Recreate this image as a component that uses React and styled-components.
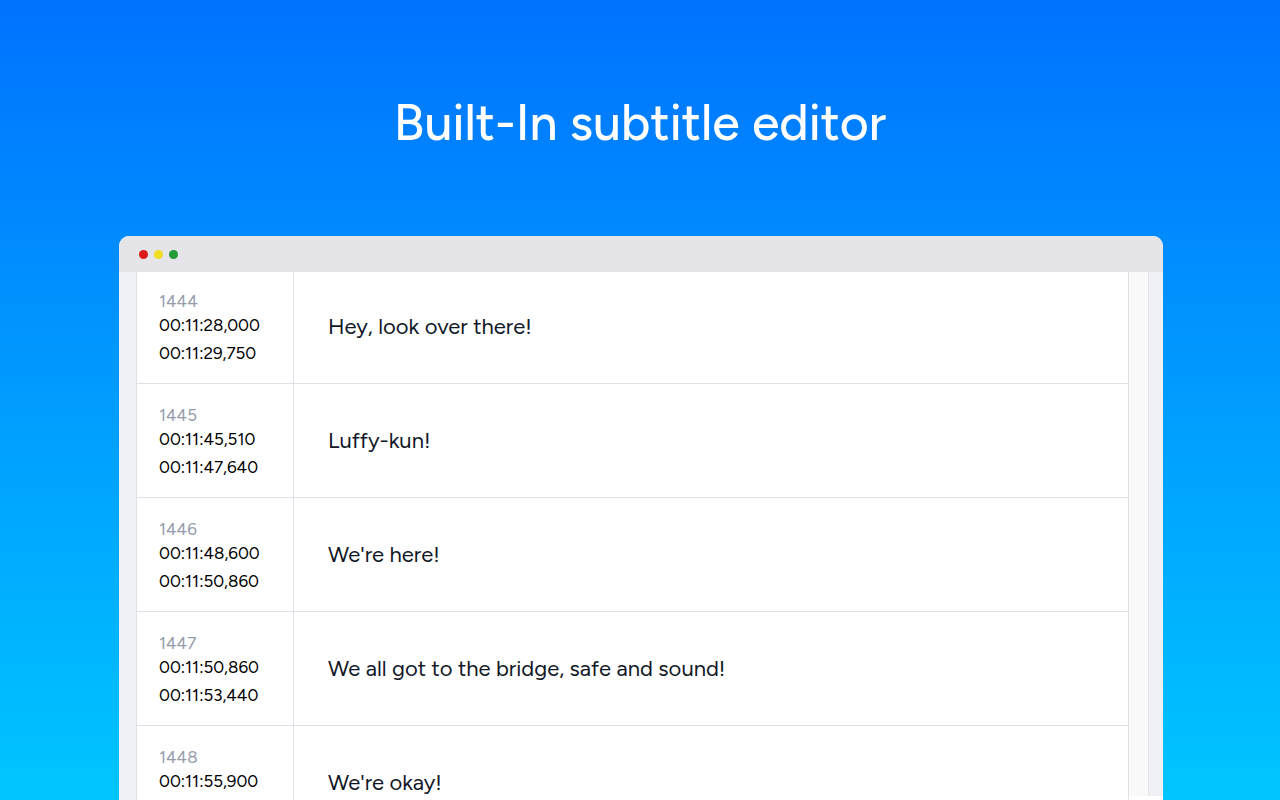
import React from 'react';
import styled, { createGlobalStyle } from 'styled-components';

const cues = [
  { id: 1444, start: '00:11:28,000', end: '00:11:29,750', text: 'Hey, look over there!' },
  { id: 1445, start: '00:11:45,510', end: '00:11:47,640', text: 'Luffy-kun!' },
  { id: 1446, start: '00:11:48,600', end: '00:11:50,860', text: "We're here!" },
  {
    id: 1447,
    start: '00:11:50,860',
    end: '00:11:53,440',
    text: 'We all got to the bridge, safe and sound!',
  },
  { id: 1448, start: '00:11:55,900', text: "We're okay!" },
];

const GlobalStyle = createGlobalStyle`
  * {
    box-sizing: border-box;
  }
  body {
    margin: 0;
    font-family: Figtree, Lato, 'Liberation Sans', sans-serif;
  }
`;

const Page = styled.div`
  display: flex;
  flex-direction: column;
  height: 100vh;
  overflow: hidden;
  background: linear-gradient(to bottom, #0072ff, #00c6ff);
`;

const Title = styled.h1`
  margin: 91px 0 81px;
  font-size: 50px;
  font-weight: 500;
  line-height: 64px;
  text-align: center;
  color: #fff;
`;

const Window = styled.section`
  display: flex;
  flex-direction: column;
  flex: 1;
  min-height: 0;
  margin: 0 117px 0 119px;
  overflow: hidden;
  border-radius: 10px 10px 0 0;
  background: #fff;
`;

const TitleBar = styled.header`
  display: flex;
  flex: none;
  align-items: center;
  gap: 6px;
  height: 36px;
  padding: 0 20px;
  background: #e4e4e9;
`;

const Dot = styled.span`
  width: 9px;
  height: 9px;
  border-radius: 50%;
  background: ${(props) => props.$color};
`;

const Editor = styled.main`
  display: flex;
  flex: 1;
  min-height: 0;
`;

const Gutter = styled.div`
  flex: none;
  width: ${(props) => props.$width};
  background: #eff1f6;
`;

const Scroller = styled.div`
  flex: 1;
  overflow: hidden;
  border-left: 1px solid #dfe1e6;
`;

const ScrollTrack = styled.div`
  flex: none;
  width: 20px;
  margin-bottom: 4px;
  border-right: 1px solid #e6e6e8;
  background: #f9f9f9;
`;

const RightGutter = styled(Gutter)`
  margin-bottom: 4px;
`;

const CueTable = styled.table`
  width: 100%;
  margin-top: -2px; /* list is scrolled a little */
  border-spacing: 0;
  table-layout: fixed;
`;

const CueRow = styled.tr`
  height: 114px;
`;

const TimeCell = styled.th`
  width: 157px;
  padding: 21px 0 0 22px;
  border-right: 1px solid #dfe1e6;
  border-bottom: 1px solid #dfe1e6;
  font-size: 17px;
  font-weight: 400;
  line-height: 28px;
  text-align: left;
  vertical-align: top;
  color: #000;
`;

const CueNumber = styled.div`
  line-height: 20px;
  color: #949cab;
`;

const TextCell = styled.td`
  padding: 0 34px;
  border-right: 1px solid #dfe1e6;
  border-bottom: 1px solid #dfe1e6;
  font-size: 22px;
  line-height: 32px;
  color: #111827;
`;

function Cue({ cue }) {
  return (
    <CueRow>
      <TimeCell scope="row">
        <CueNumber>{cue.id}</CueNumber>
        <div>{cue.start}</div>
        {cue.end ? <div>{cue.end}</div> : null}
      </TimeCell>
      <TextCell>{cue.text}</TextCell>
    </CueRow>
  );
}

export default function App() {
  return (
    <Page>
      <GlobalStyle />
      <Title>Built-In subtitle editor</Title>
      <Window>
        <TitleBar>
          <Dot $color="#dc1a17" />
          <Dot $color="#f0dc22" />
          <Dot $color="#249a38" />
        </TitleBar>
        <Editor>
          <Gutter $width="17px" />
          <Scroller>
            <CueTable>
              <tbody>
                {cues.map((cue) => (
                  <Cue key={cue.id} cue={cue} />
                ))}
              </tbody>
            </CueTable>
          </Scroller>
          <ScrollTrack />
          <RightGutter $width="14px" />
        </Editor>
      </Window>
    </Page>
  );
}
